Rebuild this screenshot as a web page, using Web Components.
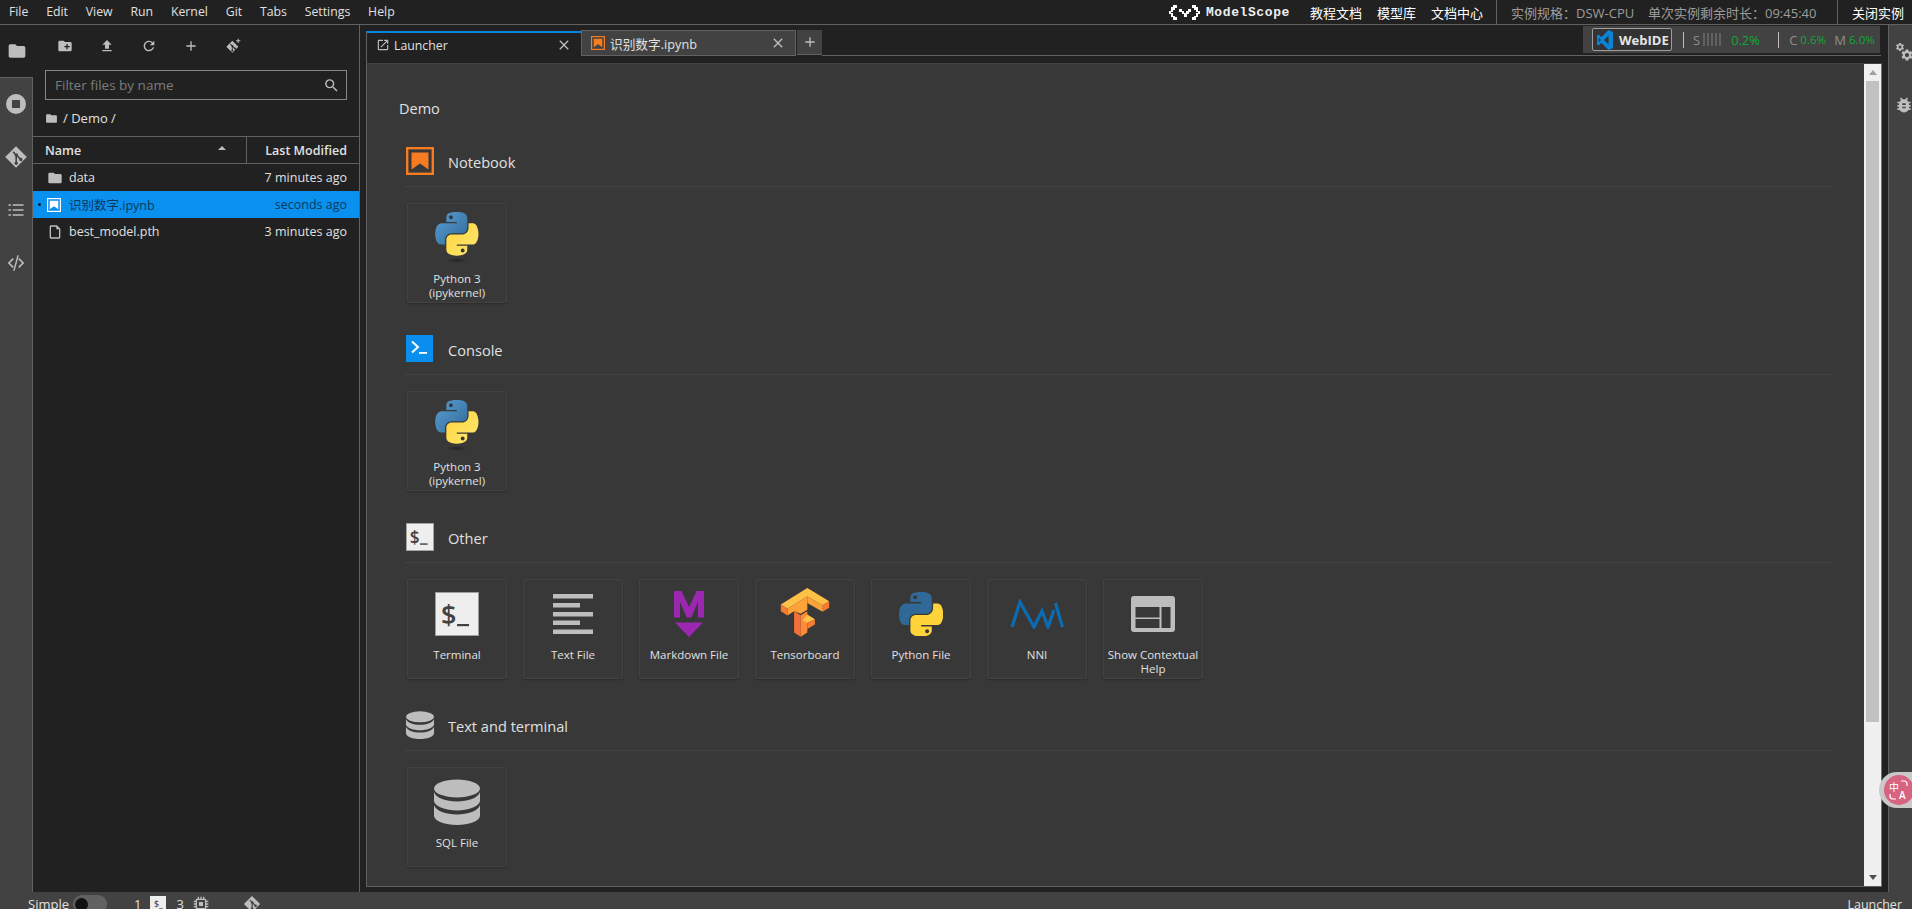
<!DOCTYPE html>
<html><head><meta charset="utf-8">
<style>
html,body{margin:0;height:909px;overflow:hidden;background:#212121}
body{font:13px "Open Sans","Noto Sans CJK SC",sans-serif;color:#e0e0e0}
</style></head><body>
<jp-app></jp-app>
<script>
const P={
folder:'<path d="M10 4H4c-1.100 0-2 .9-2 2v12c0 1.100.9 2 2 2h16c1.100 0 2-.9 2-2V8c0-1.100-.9-2-2-2h-8l-2-2z"/>',
newfolder:'<path d="M20 6h-8l-2-2H4c-1.100 0-2 .9-2 2v12c0 1.100.9 2 2 2h16c1.100 0 2-.9 2-2V8c0-1.100-.9-2-2-2zm-1 8h-3v3h-2v-3h-3v-2h3V9h2v3h3v2z"/>',
upload:'<path d="M9 16h6v-6h4l-7-7-7 7h4zm-4 2h14v2H5z"/>',
refresh:'<path d="M17.65 6.35A7.958 7.958 0 0012 4c-4.42 0-7.99 3.58-7.99 8s3.57 8 7.99 8c3.73 0 6.84-2.55 7.73-6h-2.08A5.99 5.99 0 0112 18c-3.31 0-6-2.69-6-6s2.69-6 6-6c1.66 0 3.14.69 4.22 1.78L13 11h7V4l-2.35 2.35z"/>',
plus:'<path d="M19 13h-6v6h-2v-6H5v-2h6V5h2v6h6v2z"/>',
stop:'<path fill-rule="evenodd" d="M12 2a10 10 0 100 20 10 10 0 000-20zM8 8h8v8H8z"/>',
git:'<path fill-rule="evenodd" d="M12 1.2L1.2 12 12 22.8 22.8 12zM9.6 6.2l2.2 2.2a1.7 1.7 0 012.2 2.1l2.3 2.3a1.7 1.7 0 11-1.1 1.1l-2.2-2.2v5a1.7 1.7 0 11-1.6 0v-5.2a1.7 1.7 0 01-.8-2.1L8.5 7.2z"/>',
gitclone:'<path fill-rule="evenodd" d="M11 4L2 13l9 9 9-9zM8.6 8.6l2 2a1.5 1.5 0 011.9 1.8l2 2a1.5 1.5 0 11-1 1l-1.9-1.9v4.2a1.5 1.5 0 11-1.4 0v-4.4a1.5 1.5 0 01-.7-1.8L7.6 9.6z"/><path d="M19 1h1.6v2.4H23V5h-2.4v2.4H19V5h-2.4V3.400H19z"/>',
list:'<path d="M3 5h3v2H3zm5 0h13v2H8zM3 11h3v2H3zm5 0h13v2H8zM3 17h3v2H3zm5 0h13v2H8z"/>',
code:'<path d="M8.400 6.600L3 12l5.400 5.400 1.200-1.200L5.400 12l4.200-4.200zM15.600 6.600L21 12l-5.400 5.400-1.200-1.200 4.200-4.200-4.200-4.200zM13.500 3.500h1.600L10.500 20.500H8.900z"/>',
search:'<path d="M15.5 14h-.79l-.28-.27A6.471 6.471 0 0016 9.500 6.500 6.500 0 109.500 16c1.610 0 3.090-.59 4.230-1.570l.27.28v.79l5 4.990L20.490 19l-4.990-5zm-6 0C7.010 14 5 11.990 5 9.500S7.010 5 9.500 5 14 7.010 14 9.500 11.990 14 9.500 14z"/>',
file:'<path fill-rule="evenodd" d="M6 2h9l5 5v13a2 2 0 01-2 2H6a2 2 0 01-2-2V4a2 2 0 012-2zm0 2v16h12V8h-4V4z"/>',
launch:'<path d="M19 19H5V5h7V3H5a2 2 0 00-2 2v14a2 2 0 002 2h14a2 2 0 002-2v-7h-2v7zM14 3v2h3.590l-9.830 9.830 1.410 1.410L19 6.410V10h2V3h-7z"/>',
close:'<path d="M19 6.410L17.590 5 12 10.590 6.410 5 5 6.410 10.590 12 5 17.590 6.410 19 12 13.410 17.590 19 19 17.590 13.410 12z"/>',
gear:'<path d="M19.140 12.940c.04-.3.06-.61.06-.94 0-.32-.02-.64-.07-.94l2.030-1.580a.49.49 0 00.12-.61l-1.920-3.320a.488.488 0 00-.59-.22l-2.390.96c-.5-.38-1.030-.7-1.620-.94l-.36-2.540a.484.484 0 00-.48-.41h-3.840c-.24 0-.43.17-.47.41l-.36 2.540c-.59.24-1.130.57-1.620.94l-2.390-.96c-.22-.08-.47 0-.59.22L2.740 8.870c-.12.21-.08.47.12.61l2.030 1.580c-.05.3-.09.63-.09.94s.02.64.07.94l-2.030 1.580a.49.49 0 00-.12.61l1.920 3.320c.12.22.37.29.59.22l2.390-.96c.5.38 1.030.7 1.620.94l.36 2.540c.05.24.24.41.48.41h3.840c.24 0 .44-.17.47-.41l.36-2.540c.59-.24 1.130-.56 1.620-.94l2.390.96c.22.08.47 0 .59-.22l1.920-3.320c.12-.22.07-.47-.12-.61l-2.010-1.580zM12 15.600c-1.980 0-3.600-1.620-3.600-3.600s1.620-3.600 3.600-3.600 3.600 1.620 3.600 3.600-1.620 3.600-3.600 3.600z"/>',
bug:'<path d="M20 8h-2.810a5.985 5.985 0 00-1.820-1.960L17 4.410 15.590 3l-2.170 2.170C12.960 5.060 12.490 5 12 5c-.49 0-.96.06-1.410.17L8.410 3 7 4.410l1.620 1.630C7.880 6.550 7.260 7.220 6.810 8H4v2h2.090c-.05.33-.09.66-.09 1v1H4v2h2v1c0 .34.04.67.09 1H4v2h2.810c1.040 1.790 2.970 3 5.190 3s4.150-1.210 5.190-3H20v-2h-2.090c.05-.33.09-.66.09-1v-1h2v-2h-2v-1c0-.34-.04-.67-.09-1H20V8zm-6 8h-4v-2h4v2zm0-4h-4v-2h4v2z"/>',
chip:'<path fill-rule="evenodd" d="M7 1h2v3h2V1h2v3h2V1h2v3h1a2 2 0 012 2v1h3v2h-3v2h3v2h-3v2h3v2h-3v1a2 2 0 01-2 2h-1v3h-2v-3h-2v3h-2v-3H9v3H7v-3H6a2 2 0 01-2-2v-1H1v-2h3v-2H1v-2h3V9H1V7h3V6a2 2 0 012-2h1zM6 6v12h12V6zM9 9h6v6H9z"/>'
};
const PY1='M54.9 0c-4.600 0-9 .4-12.800 1.100C30.800 3.100 28.700 7.300 28.700 15v10.200h26.800v3.400H18.600c-7.800 0-14.600 4.700-16.700 13.600-2.500 10.200-2.600 16.600 0 27.300 1.900 7.900 6.500 13.600 14.200 13.600h9.200V71c0-8.900 7.700-16.700 16.800-16.700h26.800c7.400 0 13.400-6.100 13.400-13.600V15.200c0-7.300-6.100-12.700-13.400-13.900C64.300.3 59.500 0 54.900 0zm-14.500 8.200c2.800 0 5 2.300 5 5.100 0 2.800-2.300 5.100-5 5.100-2.800 0-5-2.300-5-5.100 0-2.800 2.300-5.100 5-5.100z';
const PY2='M85.600 28.700v11.900c0 9.200-7.800 17-16.700 17H42.100c-7.300 0-13.400 6.300-13.400 13.600v25.500c0 7.300 6.300 11.500 13.400 13.600 8.500 2.500 16.600 2.900 26.800 0 6.700-2 13.400-5.900 13.400-13.600V86.500H55.500v-3.400h40.200c7.800 0 10.700-5.400 13.400-13.600 2.800-8.400 2.700-16.500 0-27.300-1.900-7.800-5.600-13.600-13.400-13.600H85.600zM70.600 93.300c2.800 0 5 2.300 5 5.100 0 2.800-2.300 5.100-5 5.100-2.800 0-5-2.300-5-5.100 0-2.800 2.300-5.100 5-5.100z';
function def(name,css,html){
  customElements.define(name,class extends HTMLElement{
    connectedCallback(){
      if(this.shadowRoot)return;
      const s=this.attachShadow({mode:'open'});
      s.innerHTML='<style>'+css+'</style>'+(typeof html==='function'?html(this):html);
    }
  });
}
def('x-icon',':host{display:inline-flex;width:var(--s,16px);height:var(--s,16px);flex:none;color:var(--c,#bdbdbd)}svg{width:100%;height:100%;fill:currentColor;display:block}',
 h=>`<svg viewBox="0 0 24 24">${P[h.getAttribute('n')]||''}</svg>`);
def('nb-icon',':host{display:inline-block;flex:none;width:var(--s,14px);height:var(--s,14px)}svg{display:block;width:100%;height:100%}',
 h=>{const c=h.getAttribute('c')||'#f57c21',b=h.getAttribute('b')||'none';return `<svg viewBox="0 0 28 28"><rect x="1.200" y="1.200" width="25.600" height="25.600" fill="${b}" stroke="${c}" stroke-width="2.400"/><path d="M5.500 5.500h17v17L14 16.500l-8.500 6z" fill="${c}"/></svg>`});
def('term-tile',':host{display:block;width:var(--s,44px);height:var(--s,44px);flex:none}svg{display:block;width:100%;height:100%}',
 `<svg viewBox="0 0 44 44"><rect x=".5" y=".5" width="43" height="43" fill="#eee" stroke="#9e9e9e"/><text x="6" y="33" font-family="Open Sans,DejaVu Sans,sans-serif" font-weight="600" font-size="27" fill="#424242">$</text><rect x="22" y="32" width="12" height="2.200" fill="#424242"/></svg>`);
def('py-icon',':host{display:block;flex:none}svg{display:block}',
 h=>{const flat=h.hasAttribute('flat');const id='g'+Math.random().toString(36).slice(2);
 return flat?`<svg width="44" height="44" viewBox="0 0 110.400 110.400"><path fill="#306998" d="${PY1}"/><path fill="#ffd43b" d="${PY2}"/></svg>`:
 `<svg width="46" height="52" viewBox="0 0 118 133"><defs><linearGradient id="${id}a" x1="0" y1="0" x2="1" y2="1"><stop offset="0" stop-color="#5a9fd4"/><stop offset="1" stop-color="#306998"/></linearGradient><linearGradient id="${id}b" x1="0" y1="0" x2="1" y2="1"><stop offset="0" stop-color="#ffd43b"/><stop offset="1" stop-color="#ffe873"/></linearGradient><radialGradient id="${id}c"><stop offset="0" stop-color="#000" stop-opacity=".4"/><stop offset="1" stop-color="#000" stop-opacity="0"/></radialGradient></defs><g transform="translate(3 0)"><path fill="url(#${id}a)" d="${PY1}"/><path fill="url(#${id}b)" d="${PY2}"/></g><ellipse cx="58" cy="124" rx="28" ry="6" fill="url(#${id}c)"/></svg>`});
def('txt-icon',':host{display:block}svg{display:block}',`<svg width="44" height="44" viewBox="0 0 44 44" fill="#bdbdbd"><rect x="2" y="2" width="40" height="4.500"/><rect x="2" y="11" width="27" height="4.500"/><rect x="2" y="20" width="40" height="4.500"/><rect x="2" y="28.500" width="27" height="4.500"/><rect x="2" y="37.500" width="40" height="4.500"/></svg>`);
def('md-icon',':host{display:block}svg{display:block}',`<svg width="32" height="48" viewBox="0 0 32 48" fill="#9c27b0"><path d="M1 1h7.500L16 17 23.500 1H31v26.500h-6V12l-6.700 15.500h-4.600L7 12v15.500H1z"/><path d="M2 32.500h28L16 47z"/></svg>`);
def('tf-icon',':host{display:block}svg{display:block}',`<svg width="50" height="54" viewBox="30 15 150 163"><polygon fill="#ffc048" points="32,68 112,18 178,58 158,70 112,44 52,81"/><polygon fill="#f57c30" points="32,68 52,81 52,101 32,88"/><polygon fill="#f57c30" points="158,70 178,58 178,78 158,90"/><polygon fill="#ffa23a" points="112,44 158,70 158,90 112,63"/><polygon fill="#ffa23a" points="52,81 112,44 112,63 112,84 92,96 72,88 52,101"/><polygon fill="#f2703a" points="72,88 92,100 92,165 72,152"/><polygon fill="#ff8a35" points="92,100 112,88 112,98 112,118 112,138 112,152 92,165"/><polygon fill="#ffc048" points="112,98 135,112 112,124 98,115"/><polygon fill="#f57c30" points="135,112 135,128 112,142 112,124"/></svg>`);
def('nni-icon',':host{display:block}svg{display:block}',`<svg width="54" height="30" viewBox="0 0 54 30" fill="none" stroke="#0b6cb3" stroke-width="3.200"><path d="M2 28L10 3 24 28 32 12 38 28 44 11"/><path d="M45.500 4l7 24"/></svg>`);
def('help-icon',':host{display:block}svg{display:block}',`<svg width="44" height="36" viewBox="0 0 44 36"><path fill="#bdbdbd" fill-rule="evenodd" d="M3 0h38a3 3 0 013 3v30a3 3 0 01-3 3H3a3 3 0 01-3-3V3a3 3 0 013-3zM4.500 11v10.500h24V11zM4.500 23v9h24v-9zM30.500 11v21h9V11z"/></svg>`);
def('db-icon',':host{display:block;flex:none}svg{display:block;width:var(--w,46px);height:var(--h,46px)}',`<svg viewBox="0 0 46 46" fill="#bdbdbd"><ellipse cx="23" cy="9.500" rx="23" ry="9"/><path d="M0 13c2 6 12 9.500 23 9.500S44 19 46 13v9.500C44 28 34 31.500 23 31.500S2 28 0 22.500z"/><path d="M0 26c2 6 12 9.500 23 9.500S44 32 46 26v11c-1 5.500-11 9-23 9S1 42.500 0 37z"/></svg>`);
def('console-icon',':host{display:block;flex:none}svg{display:block}',`<svg width="28" height="28" viewBox="0 0 28 28"><rect width="27" height="27" fill="#0a8eee"/><path d="M6 6.500l6 5.500-6 5.500" stroke="#fff" stroke-width="2" fill="none"/><rect x="13" y="17" width="8" height="1.800" fill="#fff"/></svg>`);
def('ms-logo',':host{display:block;flex:none}svg{display:block}',`<svg width="31" height="15" viewBox="0 0 31 15" fill="#fff"><path d="M4 0h4v3H6v2H4v2H2v1h2v3h2v1h2v3H4v-3H2V9H0V6h2V2h2zM23 0h4v2h2v4h2v3h-2v3h-2v3h-4v-3h2v-1h2V8h2V7h-2V5h-2V3h-2zM10 4h3v2h2v2h2V6h2V4h3v3h-2v2h-2v3h-3V9h-2V7h-3z"/></svg>`);
def('vs-logo',':host{display:block;flex:none}svg{display:block}',`<svg width="16" height="20" viewBox="0 0 16 20"><path fill="#0a84d6" d="M11.500 0L16 2v16l-4.500 2L4.500 13 1.500 15.500 0 14.500V5.500l1.500-1L4.500 7zM11.500 5.500L7 10l4.500 4.500zM1.800 7.700v4.600L4 10z"/></svg>`);

def('top-bar',`:host{display:flex;align-items:center;height:24px;border-bottom:1px solid #616161;background:#212121;font-size:12.300px;color:#e0e0e0}
.m{padding:0 8.900px;line-height:24px;white-space:nowrap}
.r{margin-left:auto;display:flex;align-items:center;height:24px;font-size:13px;color:#fff}
.ms{font:bold 13px "Liberation Mono",monospace;letter-spacing:.6px;margin:0 20px 0 6px;color:#eee;width:84px;white-space:nowrap}
.l{margin-right:15px;white-space:nowrap}
.sep{width:1px;height:24px;background:#616161}
.g{color:#9e9e9e;white-space:nowrap;font-size:13px}`,
`${['File','Edit','View','Run','Kernel','Git','Tabs','Settings','Help'].map(t=>`<span class="m">${t}</span>`).join('')}
<div class="r"><ms-logo></ms-logo><span class="ms">ModelScope</span><span class="l">教程文档</span><span class="l">模型库</span><span class="l" style="margin-right:13px">文档中心</span><span class="sep"></span><span class="g" style="margin-left:14px;width:137px">实例规格\uFF1ADSW-CPU</span><span class="g" style="width:189px">单次实例剩余时长\uFF1A09:45:40</span><span class="sep"></span><span style="margin:0 8px 0 14px;white-space:nowrap">关闭实例</span></div>`);

def('side-tab',`:host{display:flex;align-items:center;justify-content:center;height:52.800px;width:33px;box-sizing:border-box;border-right:1px solid #616161;background:#424242;--c:#bdbdbd}
:host([active]){background:#212121;border-right:0;border-bottom:1px solid #616161}`,`<slot></slot>`);
def('left-rail',`:host{display:flex;flex-direction:column;background:#424242;width:33px;box-sizing:border-box}
.f{flex:1;border-right:1px solid #616161}`,`<slot></slot><div class="f"></div>`);

def('file-row',`:host{display:flex;align-items:center;height:27px;font-size:12.500px;color:#e0e0e0;padding:0 12px 0 14px}
:host([sel]){background:#0a90ef;color:#0a3a60}
.d{width:3px;height:3px;border-radius:50%;background:transparent;margin-left:-9px;margin-right:6px;flex:none}
:host([sel]) .d{background:#123}
.i{width:16px;display:flex;margin-right:6px;flex:none}
.n{flex:1;white-space:nowrap}
.t{white-space:nowrap}`,
h=>`<span class="d"></span><span class="i"><slot name="icon"></slot></span><span class="n"><slot></slot></span><span class="t">${h.getAttribute('t')}</span>`);

def('file-browser',`:host{display:flex;flex-direction:column;width:327px;box-sizing:border-box;border-right:1px solid #616161;background:#212121}
.tb{display:flex;align-items:center;height:45px;padding:0 0 4px 11px;box-sizing:border-box;flex:none}
.tb span{width:42px;display:flex;justify-content:center;--s:16px}
.fl{margin:0 12px;height:30px;box-sizing:border-box;border:1px solid #868686;display:flex;align-items:center;padding:0 6px 0 9px;color:#7c7c7c;font-size:13.500px;justify-content:space-between;flex:none}
.cr{height:37px;box-sizing:border-box;border-bottom:1px solid #616161;display:flex;align-items:center;padding:0 0 0 12px;font-size:13px;gap:5px;flex:none;--s:12px;color:#e0e0e0}
.hd{height:27px;box-sizing:border-box;border-bottom:1px solid #616161;display:flex;align-items:center;font-weight:600;font-size:12.500px;flex:none}
.a{width:214px;box-sizing:border-box;padding:1px 20px 0 12px;display:flex;align-items:center;justify-content:space-between;height:26px;border-right:1px solid #616161}
.b{flex:1;text-align:right;padding:1px 12px 0 0;white-space:nowrap}
.car{width:0;height:0;border:4px solid transparent;border-top:0;border-bottom:4.500px solid #bdbdbd;margin-top:-5px}`,
`<div class="tb"><span><x-icon n="newfolder"></x-icon></span><span><x-icon n="upload"></x-icon></span><span><x-icon n="refresh"></x-icon></span><span><x-icon n="plus"></x-icon></span><span><x-icon n="gitclone"></x-icon></span></div>
<div class="fl"><span>Filter files by name</span><x-icon n="search" style="--s:17px"></x-icon></div>
<div class="cr"><x-icon n="folder" style="--s:13px"></x-icon><span>/ Demo /</span></div>
<div class="hd"><div class="a"><span>Name</span><span class="car"></span></div><div class="b">Last Modified</div></div>
<file-row t="7 minutes ago"><x-icon slot="icon" n="folder"></x-icon>data</file-row>
<file-row sel t="seconds ago"><nb-icon slot="icon" c="#fff" b="#0a90ef"></nb-icon>识别数字.ipynb</file-row>
<file-row t="3 minutes ago"><x-icon slot="icon" n="file"></x-icon>best_model.pth</file-row>`);

def('doc-tab',`:host{display:flex;align-items:center;width:215px;box-sizing:border-box;font-size:12.700px;padding:0 9px;gap:5px;color:#e0e0e0}
:host([cur]){height:33px;margin-top:1px;border-top:2px solid #0a84e0;border-left:1px solid #616161;background:#212121;padding:0 9px 7px 9px;gap:4px;font-size:12.300px}
:host(:not([cur])){height:26px;background:#424242;border:1px solid #616161}
.n{flex:1;white-space:nowrap}
x-icon.c{--s:16px;--c:#bdbdbd}`,`<slot name="i"></slot><span class="n"><slot></slot></span><x-icon class="c" n="close"></x-icon>`);

def('web-ide',`:host{display:flex;align-items:center;height:27px;width:297px;box-sizing:border-box;background:#424242;padding-left:9px;font-size:13px;margin:1px 1px 0 0;color:#8e8e8e;white-space:nowrap}
.btn{display:flex;align-items:center;gap:6px;width:80px;height:23px;box-sizing:border-box;border:1px solid #9e9e9e;border-radius:2px;background:#333;font-weight:700;color:#e6e6e6;padding-left:4px;font-size:13px;margin-right:11px}
.s{width:1px;height:16px;background:#bdbdbd}
.bars{display:flex;gap:2px;margin:0 10px 0 3px}
.bars i{width:2px;height:13px;background:#616161}
.gr{color:#12a836}
.sm{font-size:11.500px}`,
`<div class="btn"><vs-logo></vs-logo>WebIDE</div><span class="s"></span><span style="margin-left:9px">S</span><span class="bars"><i></i><i></i><i></i><i></i><i></i></span><span class="gr" style="font-size:12.800px;width:47px">0.2%</span><span class="s"></span><span style="margin-left:10px;margin-right:3px">C</span><span class="gr sm" style="width:34px">0.6%</span><span style="margin-right:3px">M</span><span class="gr sm">6.0%</span>`);

def('launcher-card',`:host{display:flex;flex-direction:column;align-items:center;width:100px;height:100px;box-sizing:border-box;border:1px solid #424242;box-shadow:0 1px 2px rgba(0,0,0,.25);border-radius:2px;font-size:11.500px;line-height:14px;color:#e0e0e0;text-align:center}
.i{height:67px;display:flex;align-items:center;justify-content:center;flex:none;margin-bottom:1px}
.l{width:100%;box-sizing:border-box}`,`<div class="i"><slot name="i"></slot></div><div class="l"><slot></slot></div>`);

def('launcher-section',`:host{display:block;margin:0 32px 32px 37px}
.h{display:flex;align-items:center;border-bottom:1px solid #424242;padding:0 0 11px 2px;height:28px;font-size:14.600px;gap:14px;color:#e0e0e0}
.h span{padding-top:2px}
.c{display:flex;gap:16px;padding:16px 0 0 3px}`,
h=>`<div class="h"><slot name="icon"></slot><span>${h.getAttribute('t')}</span></div><div class="c"><slot></slot></div>`);

def('launcher-panel',`:host{flex:1;display:flex;background:#383838;border-left:1px solid #616161;border-top:1px solid #424242;border-bottom:1px solid #616161;border-right:1px solid #757575;min-height:0;overflow:hidden}
.m{flex:1;min-width:0;overflow:hidden}
.t{font-size:14.500px;margin:35px 0 28px 32px;line-height:20px;color:#e0e0e0}
.sb{width:17px;background:#f0f0f0;flex:none;display:flex;flex-direction:column;align-items:center}
.up{width:0;height:0;border:4px solid transparent;border-top:0;border-bottom:5px solid #a0a0a0;margin-top:6px}
.th{width:13px;height:641px;background:#c1c1c1;margin-top:6px}
.dn{width:0;height:0;border:4px solid transparent;border-bottom:0;border-top:5px solid #505050;margin-top:auto;margin-bottom:6px}`,
`<div class="m"><div class="t">Demo</div><slot></slot></div><div class="sb"><i class="up"></i><i class="th"></i><i class="dn"></i></div>`);

def('dock-panel',`:host{display:flex;flex-direction:column;width:1516px;margin:0 6px;background:#212121;min-height:0;box-sizing:border-box;height:862px}
.tb{display:flex;align-items:flex-start;height:38px;flex:none}
.l{padding-top:5px;display:flex;align-items:flex-start}
.add{width:25px;height:25px;box-sizing:border-box;background:#424242;display:flex;align-items:center;justify-content:center;margin-left:1px;--s:16px;--c:#bdbdbd;border-bottom:1px solid #616161}
.ln{flex:1;height:31px;box-sizing:border-box;border-bottom:1px solid #616161;display:flex;justify-content:flex-end;margin-right:1px}`,
`<div class="tb"><div class="l"><doc-tab cur><x-icon slot="i" n="launch" style="--s:14px"></x-icon>Launcher</doc-tab><doc-tab><nb-icon slot="i"></nb-icon>识别数字.ipynb</doc-tab><div class="add"><x-icon n="plus"></x-icon></div></div><div class="ln"><web-ide></web-ide></div></div><slot></slot>`);

def('right-rail',`:host{display:flex;flex-direction:column;width:24px;box-sizing:border-box;background:#424242;border-left:1px solid #616161;--c:#bdbdbd;overflow:hidden}
span{height:53px;display:flex;align-items:center;padding-left:5px}`,`<span><gear-pair></gear-pair></span><span><x-icon n="bug" style="--s:20px"></x-icon></span>`);
def('gear-pair',`:host{display:block;width:22px;height:22px;position:relative;flex:none}x-icon{position:absolute}`,`<x-icon n="gear" style="--s:10px;left:1px;top:1px"></x-icon><x-icon n="gear" style="--s:14px;left:6px;top:7px"></x-icon>`);

def('status-bar',`:host{display:flex;align-items:center;height:24px;background:#424242;font-size:13px;color:#e0e0e0;padding:0 10px 0 28px;box-sizing:border-box;white-space:nowrap}
.tg{width:34px;height:18px;border-radius:9px;background:#616161;margin:0 0 0 4px;display:flex;align-items:center;padding-left:1px;box-sizing:border-box}
.tg i{width:13px;height:13px;border-radius:50%;background:#111;display:block;margin-left:1px}
.tt{width:16px;height:16px;background:#eee;color:#333;font:9px "Open Sans",sans-serif;line-height:16px;text-align:center;flex:none;margin:0 10px 0 9px}
.r{margin-left:auto;font-size:12.500px}`,
`<span>Simple</span><span class="tg"><i></i></span><span style="margin-left:27px">1</span><span class="tt">$_</span><span>3</span><x-icon n="chip" style="--s:16px;margin-left:9px"></x-icon><x-icon n="git" style="--s:18px;margin-left:34px"></x-icon><span class="r">Launcher</span>`);

def('translate-fab',`:host{position:absolute;left:1879px;top:772px;width:33px;height:36px;background:#c9c9c9;border-radius:18px 0 0 18px;display:flex;align-items:center;padding-left:5px;box-sizing:border-box;overflow:hidden}
svg{display:block;flex:none}`,
`<svg width="30" height="30" viewBox="0 0 30 30"><circle cx="15" cy="15" r="15" fill="#d6637f"/><text x="5" y="16" font-family="Noto Sans CJK SC,sans-serif" font-size="10" fill="#fff">中</text><text x="15" y="24" font-family="Open Sans,sans-serif" font-weight="600" font-size="10" fill="#fff">A</text><path d="M17 6h3a3 3 0 013 3v2M6 19v2a3 3 0 003 3h3" fill="none" stroke="#fff" stroke-width="1.200"/></svg>`);

def('jp-app',`:host{display:block;position:relative;height:909px;width:1912px;overflow:hidden}
.main{display:flex;height:867px}`,
`<top-bar></top-bar>
<div class="main">
<left-rail><side-tab active><x-icon n="folder" style="--s:20px"></x-icon></side-tab><side-tab><x-icon n="stop" style="--s:24px"></x-icon></side-tab><side-tab><x-icon n="git" style="--s:24px"></x-icon></side-tab><side-tab><x-icon n="list" style="--s:20px"></x-icon></side-tab><side-tab><x-icon n="code" style="--s:22px"></x-icon></side-tab></left-rail>
<file-browser></file-browser>
<dock-panel><launcher-panel>
<launcher-section t="Notebook"><nb-icon slot="icon" style="--s:28px"></nb-icon><launcher-card><py-icon slot="i"></py-icon>Python 3 (ipykernel)</launcher-card></launcher-section>
<launcher-section t="Console"><console-icon slot="icon"></console-icon><launcher-card><py-icon slot="i"></py-icon>Python 3 (ipykernel)</launcher-card></launcher-section>
<launcher-section t="Other"><term-tile slot="icon" style="--s:28px"></term-tile>
<launcher-card><term-tile slot="i"></term-tile>Terminal</launcher-card>
<launcher-card><txt-icon slot="i"></txt-icon>Text File</launcher-card>
<launcher-card><md-icon slot="i"></md-icon>Markdown File</launcher-card>
<launcher-card><tf-icon slot="i"></tf-icon>Tensorboard</launcher-card>
<launcher-card><py-icon flat slot="i"></py-icon>Python File</launcher-card>
<launcher-card><nni-icon slot="i"></nni-icon>NNI</launcher-card>
<launcher-card><help-icon slot="i"></help-icon>Show Contextual Help</launcher-card></launcher-section>
<launcher-section t="Text and terminal"><db-icon slot="icon" style="--w:28px;--h:28px"></db-icon><launcher-card><db-icon slot="i"></db-icon>SQL File</launcher-card></launcher-section>
</launcher-panel></dock-panel>
<right-rail></right-rail>
</div>
<status-bar></status-bar><translate-fab></translate-fab>`);
</script></body></html>
